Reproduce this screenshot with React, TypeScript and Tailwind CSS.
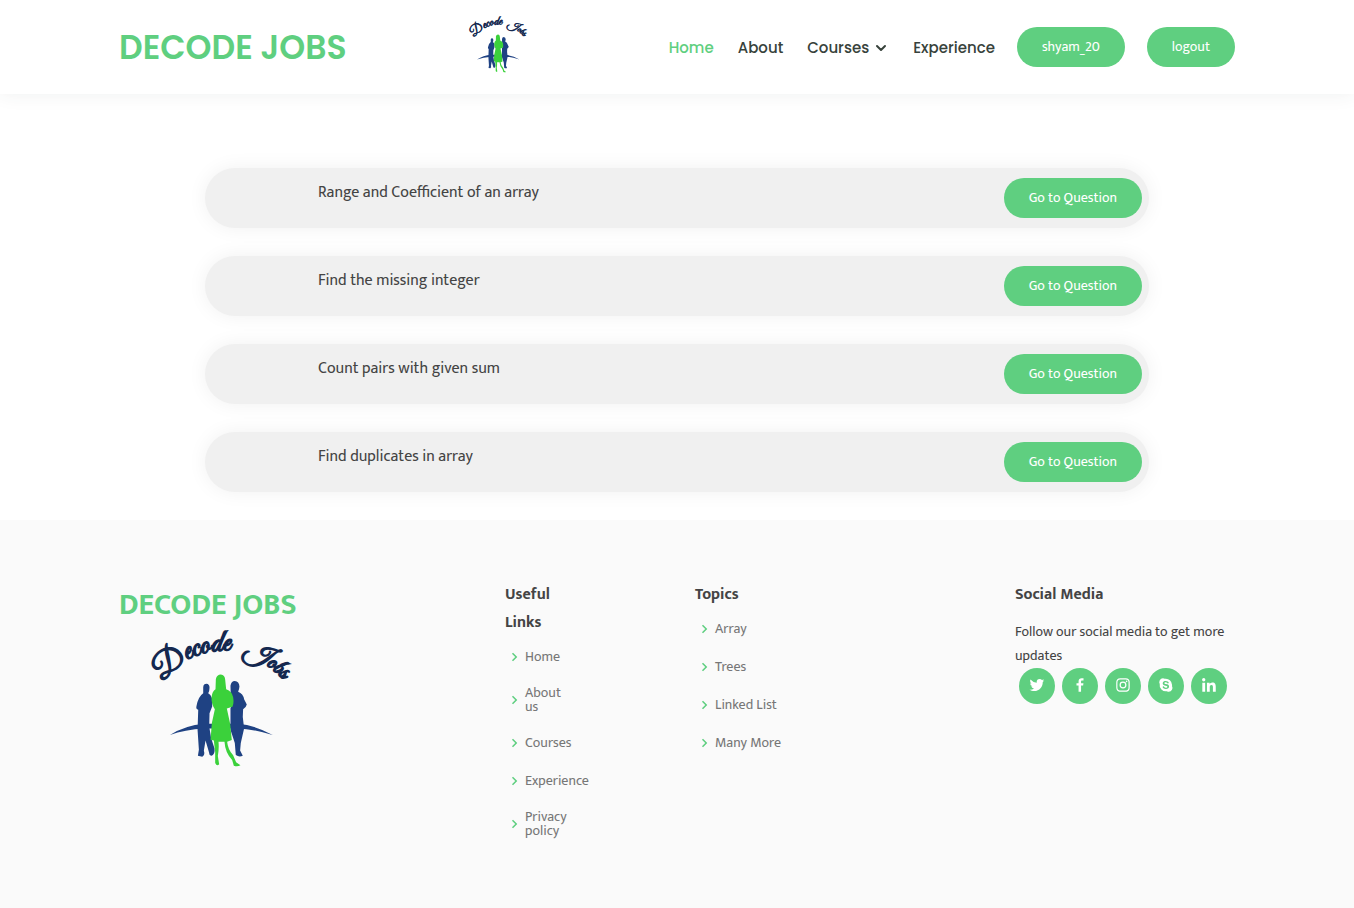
import {
  BiChevronRight,
  BiLogoFacebook,
  BiLogoInstagram,
  BiLogoLinkedin,
  BiLogoSkype,
  BiLogoTwitter,
} from "react-icons/bi";
import { ChevronDown } from "lucide-react";

const questions = [
  "Range and Coefficient of an array",
  "Find the missing integer",
  "Count pairs with given sum",
  "Find duplicates in array",
];

const usefulLinks = ["Home", "About us", "Courses", "Experience", "Privacy policy"];
const topics = ["Array", "Trees", "Linked List", "Many More"];

const socials = [
  { name: "Twitter", Icon: BiLogoTwitter },
  { name: "Facebook", Icon: BiLogoFacebook },
  { name: "Instagram", Icon: BiLogoInstagram },
  { name: "Skype", Icon: BiLogoSkype },
  { name: "LinkedIn", Icon: BiLogoLinkedin },
];

function Logo({ id, className }: { id: string; className: string }) {
  return (
    <svg viewBox="130 150 415 415" className={`overflow-visible ${className}`} role="img" aria-label="Decode Jobs">
      <path id={`${id}-left`} d="M160 306 Q 222 220 330 213 Q 370 208 420 216" fill="none" />
      <path id={`${id}-right`} d="M406 222 Q 470 242 560 336" fill="none" />
      <g
        fill="#14284f"
        stroke="#14284f"
        strokeWidth="5"
        fontFamily="'Great Vibes', 'Liberation Serif', serif"
      >
        <text fontSize="92">
          <textPath href={`#${id}-left`}>Decode</textPath>
        </text>
        <text fontSize="74">
          <textPath href={`#${id}-right`}>Jobs</textPath>
        </text>
      </g>
      <g fill="#1f4283">
        <path d="M181 466 Q225 437 285 432 L385 432 Q440 437 490 466 Q430 447 385 446 L285 446 Q225 449 181 466Z" />
        <path d="M281 322 Q282 312 291 312 Q300 313 300 324 Q300 334 296 340 Q306 345 308 356 L308 380 L300 400 L299 440 Q302 474 315 506 Q317 522 307 528 Q299 528 299 520 L288 482 L283 512 Q287 526 278 531 L265 528 L268 510 L264 450 L266 390 Q258 388 261 378 Q266 350 281 340Z" />
        <path d="M363 318 Q365 303 376 303 Q389 304 390 320 Q389 330 386 336 Q401 342 404 358 L412 374 Q410 383 401 388 L400 412 L404 446 L394 490 L392 512 L400 528 Q389 533 379 526 L376 490 L363 450 L363 385 Q372 370 364 352Z" />
      </g>
      <path
        fill="#3bd13b"
        d="M319 298 Q322 284 334 284 Q346 285 347 299 L350 328 Q368 334 371 352 Q374 371 369 381 L352 386 L362 432 L367 481 L353 486 Q355 509 371 527 L380 548 L393 557 Q383 562 373 558 L368 541 Q347 519 345 486 L327 486 Q329 508 325 529 L329 554 Q322 561 317 550 L317 518 L313 482 L303 480 L307 430 L316 388 Q305 374 306 352 Q308 334 318 328Z"
      />
    </svg>
  );
}

function FooterLinks({ items }: { items: string[] }) {
  return (
    <ul className="flex flex-col gap-5 text-sm leading-[14px] text-[#777777]">
      {items.map((item) => (
        <li key={item} className="flex items-center gap-0.5">
          <BiChevronRight className="size-[18px] shrink-0 text-[#5fcf80]" />
          <a href="#">{item}</a>
        </li>
      ))}
    </ul>
  );
}

export default function App() {
  return (
    <div className="flex min-h-screen flex-col bg-white font-[Mukta,'Noto_Sans',sans-serif] text-[#444444]">
      <header className="shadow-[0_0_18px_rgba(55,66,59,0.08)]">
        <div className="mx-auto flex h-[94px] w-full max-w-[1140px] items-center justify-between px-3">
          <a
            href="#"
            className="pt-0.5 font-[Poppins,Inter,sans-serif] text-[33px] font-semibold text-[#5fcf80]"
          >
            DECODE JOBS
          </a>
          <Logo id="header-arc" className="mr-[18px] mb-1.5 size-[57px]" />
          <div className="flex items-center gap-[22px]">
            <nav className="flex items-center gap-6 pt-0.5 font-[Poppins,Inter,sans-serif] text-[15px] font-medium text-[#37423b]">
              <a href="#" className="text-[#5fcf80]">Home</a>
              <a href="#">About</a>
              <a href="#" className="flex items-center gap-1">
                Courses
                <ChevronDown className="size-4" strokeWidth={3} />
              </a>
              <a href="#">Experience</a>
            </nav>
            <button className="h-10 rounded-full bg-[#5fcf80] px-[25px] text-sm text-white">shyam_20</button>
            <button className="h-10 rounded-full bg-[#5fcf80] px-[25px] text-sm text-white">logout</button>
          </div>
        </div>
      </header>

      <main className="mx-auto flex w-full max-w-[944px] flex-col gap-7 pt-[74px] pb-7">
        {questions.map((question) => (
          <article
            key={question}
            className="flex h-[60px] items-center justify-between rounded-full bg-[#f0f0f0] pr-[7px] pl-[113px] shadow-[0_0_20px_rgba(0,0,0,0.06)]"
          >
            <h2 className="pb-2.5 text-base">{question}</h2>
            <button className="h-10 rounded-full bg-[#5fcf80] px-[25px] text-sm text-white">
              Go to Question
            </button>
          </article>
        ))}
      </main>

      <footer className="grow bg-[#fafafa]">
        <div className="mx-auto grid w-full max-w-[1140px] grid-cols-[386fr_190fr_320fr_220fr] px-3 pt-[61px] pb-[60px]">
          <div>
            <h3 className="pt-[7px] text-[30px] leading-[34px] font-bold text-[#5fcf80]">DECODE JOBS</h3>
            <Logo id="footer-arc" className="mt-2 ml-[34px] size-[138px]" />
          </div>
          <div className="w-[68px]">
            <h4 className="mb-[11px] text-base leading-7 font-bold">Useful Links</h4>
            <FooterLinks items={usefulLinks} />
          </div>
          <div>
            <h4 className="mb-[11px] text-base leading-7 font-bold">Topics</h4>
            <FooterLinks items={topics} />
          </div>
          <div>
            <h4 className="mb-[11px] text-base leading-7 font-bold">Social Media</h4>
            <p className="text-sm leading-6">Follow our social media to get more updates</p>
            <div className="ml-1 flex gap-[7px]">
              {socials.map(({ name, Icon }) => (
                <a
                  key={name}
                  href="#"
                  aria-label={name}
                  className="grid size-9 shrink-0 place-items-center rounded-full bg-[#5fcf80] pb-0.5 text-white"
                >
                  <Icon className="size-[18px]" />
                </a>
              ))}
            </div>
          </div>
        </div>
      </footer>
    </div>
  );
}
